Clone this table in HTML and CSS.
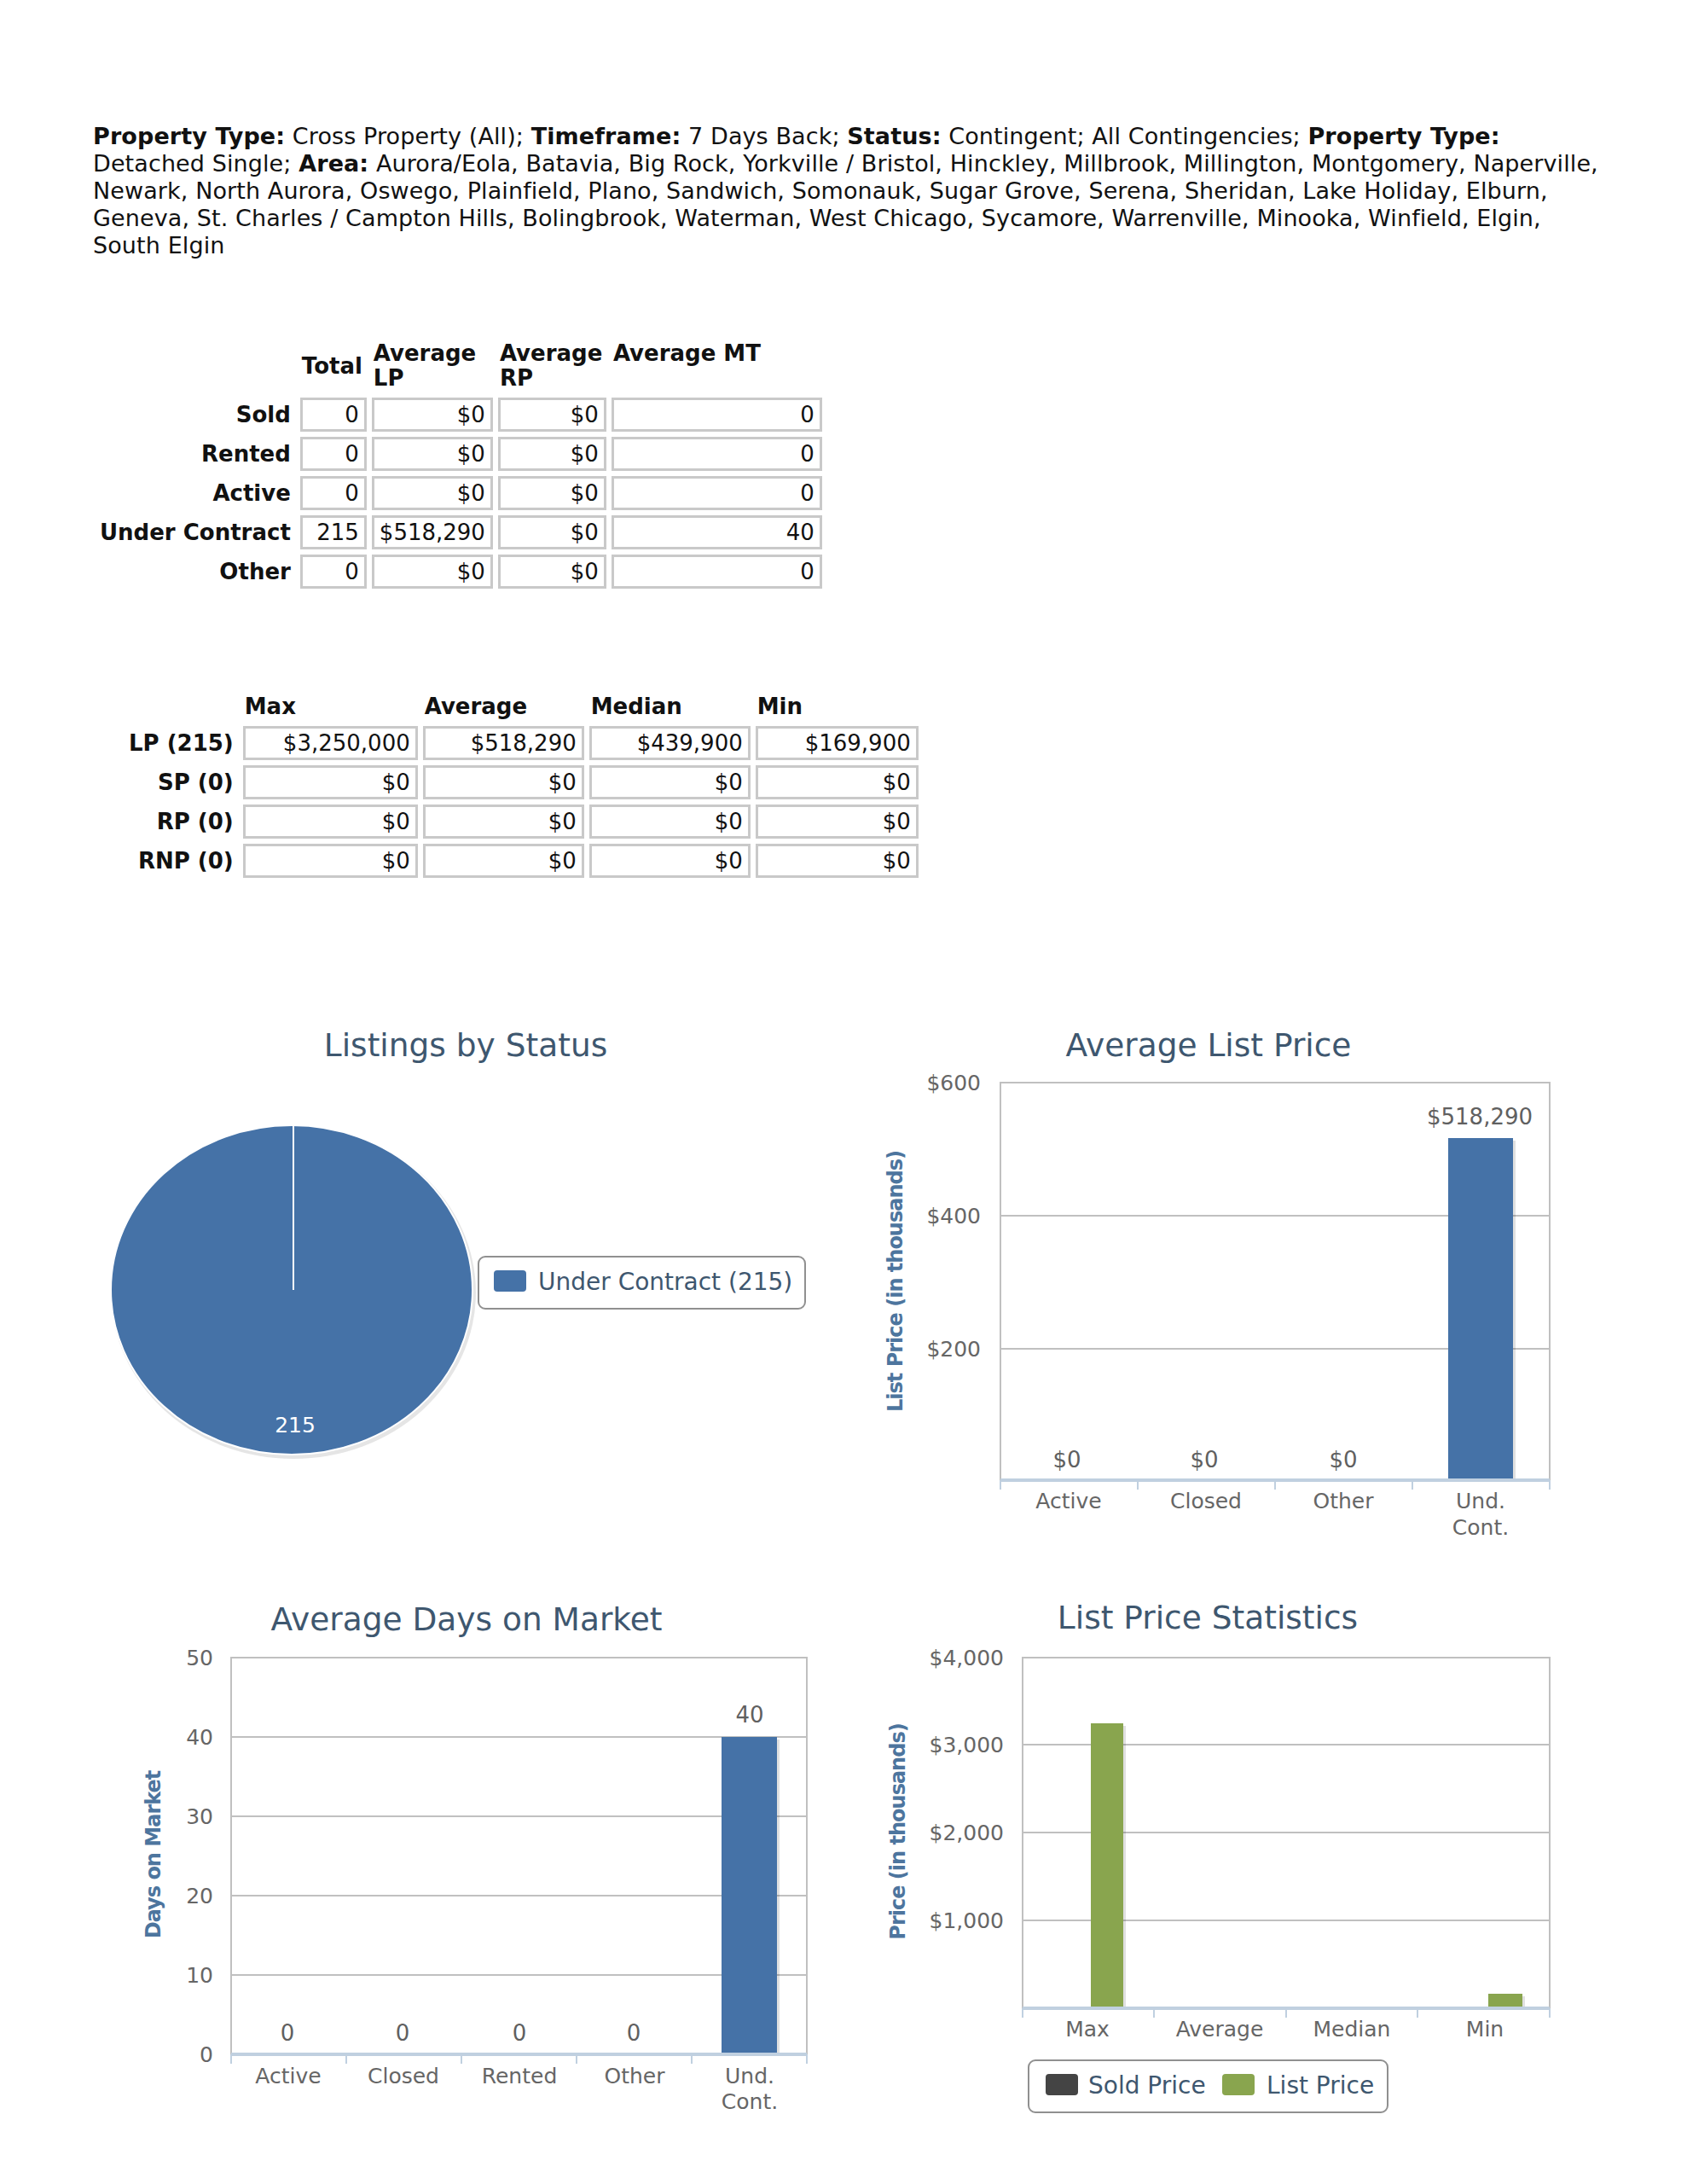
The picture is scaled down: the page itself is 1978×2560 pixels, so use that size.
FILE: index.html
```html
<!DOCTYPE html>
<html lang="en">
<head>
<meta charset="utf-8">
<title>Market Report</title>
<link rel="stylesheet" href="styles.css">
</head>
<body>
<div class="page">
  <p class="criteria"><b>Property Type:</b> Cross Property (All); <b>Timeframe:</b> 7 Days Back; <b>Status:</b> Contingent; All Contingencies; <b>Property Type:</b><br>Detached Single; <b>Area:</b> Aurora/Eola, Batavia, Big Rock, Yorkville / Bristol, Hinckley, Millbrook, Millington, Montgomery, Naperville,<br>Newark, North Aurora, Oswego, Plainfield, Plano, Sandwich, Somonauk, Sugar Grove, Serena, Sheridan, Lake Holiday, Elburn,<br>Geneva, St. Charles / Campton Hills, Bolingbrook, Waterman, West Chicago, Sycamore, Warrenville, Minooka, Winfield, Elgin,<br>South Elgin</p>

  <table class="grid summary">
    <tr class="head">
      <th></th>
      <th class="w-total">Total</th>
      <th class="w-lp">Average LP</th>
      <th class="w-rp">Average RP</th>
      <th class="w-mt">Average MT</th>
    </tr>
    <tr><th class="label">Sold</th><td>0</td><td>$0</td><td>$0</td><td>0</td></tr>
    <tr><th class="label">Rented</th><td>0</td><td>$0</td><td>$0</td><td>0</td></tr>
    <tr><th class="label">Active</th><td>0</td><td>$0</td><td>$0</td><td>0</td></tr>
    <tr><th class="label">Under Contract</th><td>215</td><td>$518,290</td><td>$0</td><td>40</td></tr>
    <tr><th class="label">Other</th><td>0</td><td>$0</td><td>$0</td><td>0</td></tr>
  </table>

  <table class="grid stats">
    <tr class="head">
      <th></th>
      <th class="w-max">Max</th>
      <th class="w-avg">Average</th>
      <th class="w-med">Median</th>
      <th class="w-min">Min</th>
    </tr>
    <tr><th class="label">LP (215)</th><td>$3,250,000</td><td>$518,290</td><td>$439,900</td><td>$169,900</td></tr>
    <tr><th class="label">SP (0)</th><td>$0</td><td>$0</td><td>$0</td><td>$0</td></tr>
    <tr><th class="label">RP (0)</th><td>$0</td><td>$0</td><td>$0</td><td>$0</td></tr>
    <tr><th class="label">RNP (0)</th><td>$0</td><td>$0</td><td>$0</td><td>$0</td></tr>
  </table>

  <div class="charts">
    <!-- Listings by Status -->
    <svg class="chart" width="880" height="650" viewBox="0 0 880 650">
      <text class="ch-title" x="437" y="45">Listings by Status</text>
      <ellipse cx="235" cy="335" rx="214" ry="195" class="shadow"/>
      <ellipse cx="233" cy="332" rx="212" ry="193" class="pie"/>
      <line x1="235" y1="139" x2="235" y2="332" class="pie-split"/>
      <text class="pie-label" x="237" y="490">215</text>
      <rect x="452" y="293" width="383" height="61" rx="8" class="legend-box"/>
      <rect x="470" y="309" width="38" height="25" rx="4" class="blue"/>
      <text class="legend-text" x="522" y="322">Under Contract (215)</text>
    </svg>

    <!-- Average List Price -->
    <svg class="chart" width="880" height="650" viewBox="0 0 880 650">
      <text class="ch-title" x="417" y="45">Average List Price</text>
      <rect x="173" y="89" width="644" height="466" class="plot"/>
      <line x1="173" y1="245" x2="817" y2="245" class="gridline"/>
      <line x1="173" y1="401" x2="817" y2="401" class="gridline"/>
      <text class="y-label" x="150" y="89">$600</text>
      <text class="y-label" x="150" y="245">$400</text>
      <text class="y-label" x="150" y="401">$200</text>
      <text class="y-title" transform="translate(50 322) rotate(-90)">List Price (in thousands)</text>
      <rect x="701" y="157" width="76" height="398" class="bar-shadow"/>
      <rect x="698" y="154" width="76" height="401" class="blue"/>
      <line x1="173" y1="555" x2="817" y2="555" class="x-axis"/>
      <path d="M173 555v11M334 555v11M495 555v11M656 555v11M817 555v11" class="tick"/>
      <text class="data-label" x="251" y="531">$0</text>
      <text class="data-label" x="412" y="531">$0</text>
      <text class="data-label" x="575" y="531">$0</text>
      <text class="data-label" x="735" y="129">$518,290</text>
      <text class="x-label" x="253" y="579">Active</text>
      <text class="x-label" x="414" y="579">Closed</text>
      <text class="x-label" x="575" y="579">Other</text>
      <text class="x-label" x="736" y="579">Und.</text>
      <text class="x-label" x="736" y="610">Cont.</text>
    </svg>

    <!-- Average Days on Market -->
    <svg class="chart" width="880" height="650" viewBox="0 0 880 650">
      <text class="ch-title" x="438" y="48">Average Days on Market</text>
      <rect x="162" y="93" width="675" height="465" class="plot"/>
      <line x1="162" y1="186" x2="837" y2="186" class="gridline"/>
      <line x1="162" y1="279" x2="837" y2="279" class="gridline"/>
      <line x1="162" y1="372" x2="837" y2="372" class="gridline"/>
      <line x1="162" y1="465" x2="837" y2="465" class="gridline"/>
      <text class="y-label" x="141" y="93">50</text>
      <text class="y-label" x="141" y="186">40</text>
      <text class="y-label" x="141" y="279">30</text>
      <text class="y-label" x="141" y="372">20</text>
      <text class="y-label" x="141" y="465">10</text>
      <text class="y-label" x="141" y="558">0</text>
      <text class="y-title" transform="translate(71 324) rotate(-90)">Days on Market</text>
      <rect x="740" y="189" width="65" height="369" class="bar-shadow"/>
      <rect x="737" y="186" width="65" height="372" class="blue"/>
      <line x1="162" y1="558" x2="837" y2="558" class="x-axis"/>
      <path d="M162 558v11M297 558v11M432 558v11M567 558v11M702 558v11M837 558v11" class="tick"/>
      <text class="data-label" x="228" y="533">0</text>
      <text class="data-label" x="363" y="533">0</text>
      <text class="data-label" x="500" y="533">0</text>
      <text class="data-label" x="634" y="533">0</text>
      <text class="data-label" x="770" y="160">40</text>
      <text class="x-label" x="229" y="583">Active</text>
      <text class="x-label" x="364" y="583">Closed</text>
      <text class="x-label" x="500" y="583">Rented</text>
      <text class="x-label" x="635" y="583">Other</text>
      <text class="x-label" x="770" y="583">Und.</text>
      <text class="x-label" x="770" y="613">Cont.</text>
    </svg>

    <!-- List Price Statistics -->
    <svg class="chart" width="880" height="650" viewBox="0 0 880 650">
      <text class="ch-title" x="416" y="46">List Price Statistics</text>
      <rect x="199" y="93" width="618" height="411" class="plot"/>
      <line x1="199" y1="195" x2="817" y2="195" class="gridline"/>
      <line x1="199" y1="298" x2="817" y2="298" class="gridline"/>
      <line x1="199" y1="401" x2="817" y2="401" class="gridline"/>
      <text class="y-label" x="177" y="93">$4,000</text>
      <text class="y-label" x="177" y="195">$3,000</text>
      <text class="y-label" x="177" y="298">$2,000</text>
      <text class="y-label" x="177" y="401">$1,000</text>
      <text class="y-title" transform="translate(53 297) rotate(-90)">Price (in thousands)</text>
      <rect x="282" y="173" width="38" height="331" class="bar-shadow"/>
      <rect x="279" y="170" width="38" height="334" class="green"/>
      <rect x="748" y="490" width="40" height="14" class="bar-shadow"/>
      <rect x="745" y="487" width="40" height="17" class="green"/>
      <line x1="199" y1="504" x2="817" y2="504" class="x-axis"/>
      <path d="M199 504v11M353 504v11M508 504v11M662 504v11M817 504v11" class="tick"/>
      <text class="x-label" x="275" y="528">Max</text>
      <text class="x-label" x="430" y="528">Average</text>
      <text class="x-label" x="585" y="528">Median</text>
      <text class="x-label" x="741" y="528">Min</text>
      <rect x="206" y="565" width="421" height="61" rx="8" class="legend-box"/>
      <rect x="226" y="581" width="38" height="25" rx="4" class="dark"/>
      <text class="legend-text" x="276" y="594">Sold Price</text>
      <rect x="433" y="581" width="38" height="25" rx="4" class="green"/>
      <text class="legend-text" x="485" y="594">List Price</text>
    </svg>
  </div>
</div>
</body>
</html>
```
FILE: styles.css
```css
html, body {
  margin: 0;
  padding: 0;
  background: #ffffff;
}

.page {
  padding: 144px 107px 40px 109px;
  font-family: "DejaVu Sans", Verdana, sans-serif;
  color: #111111;
}

.criteria {
  margin: 0;
  width: 1762px;
  font-size: 27px;
  letter-spacing: 0.1px;
  line-height: 32px;
  white-space: nowrap;
}

.criteria b {
  font-weight: bold;
}

.grid {
  border-collapse: separate;
  border-spacing: 6px;
  font-size: 26px;
  line-height: 30px;
}

.grid th,
.grid td {
  box-sizing: border-box;
}

.grid .head th {
  text-align: left;
  vertical-align: middle;
  font-weight: bold;
  padding: 2px 2px;
  line-height: 29px;
}

.grid .head th.w-mt {
  vertical-align: top;
}

.grid th.label {
  text-align: right;
  font-weight: bold;
  padding: 2px 5px 2px 2px;
  white-space: nowrap;
}

.grid td {
  border: 3px solid #c9c9c9;
  height: 40px;
  padding: 2px 6px;
  text-align: right;
  white-space: nowrap;
}

.summary {
  margin-top: 88px;
}

.summary .w-total { width: 78px; }
.summary .w-lp { width: 137px; }
.summary .w-rp { width: 127px; }
.summary .w-mt { width: 247px; }

.stats {
  margin-top: 110px;
  margin-left: 34px;
}

.stats .w-max { width: 205px; }
.stats .w-avg { width: 189px; }
.stats .w-med { width: 189px; }
.stats .w-min { width: 191px; }

.charts {
  margin-top: 145px;
  display: grid;
  grid-template-columns: 880px 880px;
  column-gap: 11px;
  row-gap: 20px;
}

.chart {
  display: block;
  font-family: "DejaVu Sans", Verdana, sans-serif;
}

.ch-title {
  font-size: 37.5px;
  fill: #3e576f;
  text-anchor: middle;
  dominant-baseline: central;
}

.plot {
  fill: #ffffff;
  stroke: #c0c0c0;
  stroke-width: 2;
}

.gridline {
  stroke: #c0c0c0;
  stroke-width: 2;
}

.x-axis {
  stroke: #c0d0e0;
  stroke-width: 4;
}

.tick {
  stroke: #c0d0e0;
  stroke-width: 2;
  fill: none;
}

.y-label {
  font-size: 25px;
  fill: #666666;
  text-anchor: end;
  dominant-baseline: central;
}

.x-label {
  font-size: 25px;
  fill: #666666;
  text-anchor: middle;
  dominant-baseline: central;
}

.data-label {
  font-size: 26px;
  fill: #606060;
  text-anchor: middle;
  dominant-baseline: central;
}

.y-title {
  font-size: 24px;
  letter-spacing: -1px;
  font-weight: bold;
  fill: #4d759e;
  text-anchor: middle;
  dominant-baseline: central;
}

.blue { fill: #4572a7; }
.green { fill: #89a54e; }
.dark { fill: #444444; }

.bar-shadow {
  fill: #000000;
  fill-opacity: 0.12;
}

.shadow {
  fill: #000000;
  fill-opacity: 0.1;
}

.pie {
  fill: #4572a7;
  stroke: #ffffff;
  stroke-width: 2;
}

.pie-split {
  stroke: #ffffff;
  stroke-width: 2;
}

.pie-label {
  font-size: 25px;
  fill: #ffffff;
  text-anchor: middle;
  dominant-baseline: central;
}

.legend-box {
  fill: #ffffff;
  stroke: #909090;
  stroke-width: 2;
}

.legend-text {
  font-size: 28px;
  fill: #3e576f;
  dominant-baseline: central;
}
```
